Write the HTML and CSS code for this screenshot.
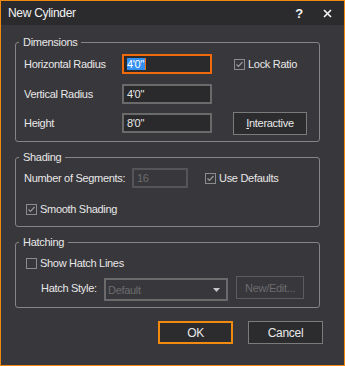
FILE: index.html
```html
<!DOCTYPE html>
<html lang="en">
<head>
    <meta charset="UTF-8">
    <title>New Cylinder</title>
    <link rel="stylesheet" href="styles.css">
</head>
<body>
    <div class="dialog">
        <div class="titlebar">
            <span class="title">New Cylinder</span>
            <span class="tb-btn help">?</span>
            <svg class="tb-btn close" width="9" height="9" viewBox="0 0 9 9"><path d="M1 1 L8 8 M8 1 L1 8" stroke="#f2f2f2" stroke-width="1.7"/></svg>
        </div>

        <div class="content">
            <fieldset class="group">
                <legend>Dimensions</legend>
                <div class="dims">
                    <span class="label">Horizontal Radius</span>
                    <div class="field focused"><span class="sel">4'0"</span><span class="caret"></span></div>
                    <label class="check lock">
                        <svg class="box" width="11" height="11" viewBox="0 0 11 11"><rect x="0.5" y="0.5" width="10" height="10" fill="none" stroke="#8c8c8c"/><path d="M2.5 5.5 L4.5 7.5 L8.5 3" fill="none" stroke="#9a9a9a" stroke-width="1.2"/></svg>
                        Lock Ratio
                    </label>

                    <span class="label">Vertical Radius</span>
                    <div class="field">4'0"</div>
                    <span></span>

                    <span class="label">Height</span>
                    <div class="field">8'0"</div>
                    <div class="button interactive"><u>I</u>nteractive</div>
                </div>
            </fieldset>

            <fieldset class="group">
                <legend>Shading</legend>
                <div class="shading">
                    <div class="row">
                        <span class="label seg-label">Number of Segments:</span>
                        <div class="field disabled seg">16</div>
                        <label class="check defaults">
                            <svg class="box" width="11" height="11" viewBox="0 0 11 11"><rect x="0.5" y="0.5" width="10" height="10" fill="none" stroke="#8c8c8c"/><path d="M2.5 5.5 L4.5 7.5 L8.5 3" fill="none" stroke="#9a9a9a" stroke-width="1.2"/></svg>
                            Use Defaults
                        </label>
                    </div>
                    <div class="row second">
                        <label class="check">
                            <svg class="box" width="11" height="11" viewBox="0 0 11 11"><rect x="0.5" y="0.5" width="10" height="10" fill="none" stroke="#8c8c8c"/><path d="M2.5 5.5 L4.5 7.5 L8.5 3" fill="none" stroke="#9a9a9a" stroke-width="1.2"/></svg>
                            Smooth Shading
                        </label>
                    </div>
                </div>
            </fieldset>

            <fieldset class="group">
                <legend>Hatching</legend>
                <div class="hatching">
                    <div class="row">
                        <label class="check">
                            <svg class="box" width="11" height="11" viewBox="0 0 11 11"><rect x="0.5" y="0.5" width="10" height="10" fill="none" stroke="#8c8c8c"/></svg>
                            Show Hatch Lines
                        </label>
                    </div>
                    <div class="row style-row">
                        <span class="label style-label">Hatch Style:</span>
                        <div class="select">
                            <span>Default</span>
                            <svg width="7" height="4" viewBox="0 0 7 4"><path d="M0 0 H7 L3.5 4 Z" fill="#c8c8c8"/></svg>
                        </div>
                        <div class="button disabled edit">New/Edit...</div>
                    </div>
                </div>
            </fieldset>

            <div class="actions">
                <div class="button default">OK</div>
                <div class="button">Cancel</div>
            </div>
        </div>
    </div>
</body>
</html>
```

FILE: styles.css
```css
body {
    margin: 0;
    background: #38373c;
    font-family: "Liberation Sans", Arial, sans-serif;
    font-size: 11px;
    letter-spacing: -0.3px;
    color: #e8e8e8;
}
.dialog {
    width: 345px;
    height: 366px;
    box-sizing: border-box;
    border: 1px solid #f28a10;
    background: #38373c;
}
.titlebar {
    height: 24px;
    background: #2b2b2e;
    display: flex;
    align-items: center;
    padding: 0 0 0 7px;
}
.title {
    font-size: 12px;
    flex: 1;
    color: #f2f2f2;
}
.tb-btn {
    font-size: 13px;
    font-weight: bold;
    color: #f2f2f2;
    text-align: center;
}
.help {
    width: 10px;
    margin-right: 19px;
}
.close {
    margin-right: 12px;
}
.content {
    padding-top: 10px;
}
.group {
    width: 305px;
    box-sizing: border-box;
    margin: 0 0 8px 14px;
    padding: 0;
    border: 1px solid #858585;
    border-radius: 3px;
}
.group legend {
    margin-left: 3px;
    padding: 0 4px;
    line-height: 14px;
}
.label {
    white-space: nowrap;
}
.field {
    height: 20px;
    box-sizing: border-box;
    border: 2px solid #6a6a6a;
    background: #2a2a2c;
    padding: 0 0 0 3px;
    line-height: 16px;
    display: flex;
    align-items: center;
}
.field.focused {
    border-color: #f06a0c;
}
.sel {
    background: #3390f0;
    color: #ffffff;
    line-height: 12px;
    padding: 0 1px 0 0;
}
.caret {
    width: 1px;
    height: 12px;
    background: #f06a0c;
}
.field.disabled {
    border-color: #555458;
    color: #6c6c6c;
    background: #38373c;
}
.check {
    display: flex;
    align-items: center;
    gap: 3px;
    white-space: nowrap;
}
.box {
    flex: none;
}
.button {
    height: 23px;
    box-sizing: border-box;
    border: 1px solid #7b7b7b;
    background: #2c2c2f;
    display: flex;
    align-items: center;
    justify-content: center;
}
.button.default {
    border: 2px solid #f28a10;
}
.button.disabled {
    border-color: #5c5c5e;
    color: #6c6c6c;
    background: #38373c;
}

/* dimensions */
.dims {
    display: grid;
    grid-template-columns: 98px 90px auto;
    grid-template-rows: 20px 20px 20px;
    row-gap: 9.5px;
    align-items: center;
    padding: 5px 0 8px 8px;
}
.lock {
    margin-left: 22px;
}
.interactive {
    width: 74px;
    margin-left: 21px;
}

/* shading */
.shading {
    padding: 4px 0 7px 8px;
}
.row {
    display: flex;
    align-items: center;
    height: 20px;
}
.seg-label {
    width: 108px;
}
.seg {
    width: 56px;
}
.defaults {
    margin-left: 17px;
}
.shading .second {
    margin-top: 11px;
    padding-left: 2px;
}

/* hatching */
.hatching {
    padding: 4px 0 6px 10px;
}
.style-row {
    height: 25px;
    margin-top: 3px;
    align-items: flex-start;
    padding-left: 15px;
}
.style-label {
    width: 63px;
    line-height: 25px;
}
.select {
    width: 124px;
    height: 23px;
    margin-top: 2px;
    box-sizing: border-box;
    border: 2px solid #6a6a6a;
    background: #38373c;
    color: #6c6c6c;
    display: flex;
    align-items: center;
    justify-content: space-between;
    padding: 0 6px 0 2px;
}
.edit {
    width: 68px;
    margin-left: 8px;
}

.actions {
    display: flex;
    justify-content: flex-end;
    gap: 15px;
    padding: 5px 21px 0 0;
}
.actions .button {
    width: 75px;
    font-size: 12px;
}
```
